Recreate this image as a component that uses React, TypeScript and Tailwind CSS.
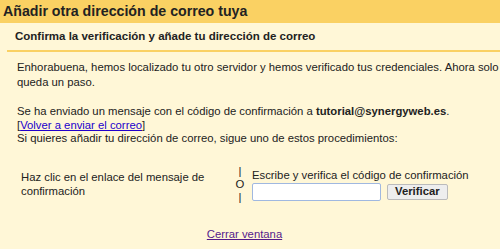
export default function App() {
  return (
    <div
      className="w-[500px] h-[249px] bg-[#fff7d7] text-[#222] overflow-hidden"
      style={{ fontFamily: '"Liberation Sans", Arial, sans-serif' }}
    >
      <div className="h-[23px] bg-[#fad163] pl-[3px] flex items-center">
        <h1 className="text-[14.2px] font-bold leading-none">Añadir otra dirección de correo tuya</h1>
      </div>

      <div className="ml-[7px] h-[29px] border-b-2 border-[#fad163] pl-[8px] flex items-center">
        <h2 className="text-[11.5px] font-bold">Confirma la verificación y añade tu dirección de correo</h2>
      </div>

      <div className="pl-[17px] pt-[8px] text-[11.3px]">
        <p className="leading-[15px] w-[482px]">
          Enhorabuena, hemos localizado tu otro servidor y hemos verificado tus credenciales. Ahora solo queda un paso.
        </p>

        <div className="mt-[15px] leading-[13.5px]">
          <div>
            Se ha enviado un mensaje con el código de confirmación a <b>tutorial@synergyweb.es</b>.
          </div>
          <div>
            [<a href="#" className="text-[#2200cc] underline">Volver a enviar el correo</a>]
          </div>
          <div>Si quieres añadir tu dirección de correo, sigue uno de estos procedimientos:</div>
        </div>

        <div className="mt-[19px] flex items-center">
          <div className="w-[212px] pl-[4px] leading-[14px]">
            Haz clic en el enlace del mensaje de confirmación
          </div>
          <div className="w-[22px] flex flex-col items-center leading-[13px]">
            <span>|</span>
            <span>O</span>
            <span>|</span>
          </div>
          <div className="pl-[1px]">
            <div className="leading-[14px]">Escribe y verifica el código de confirmación</div>
            <div className="mt-[1px] flex items-center gap-[6px]">
              <input
                type="text"
                className="w-[129px] h-[18px] bg-white border border-[#a0b8e0] rounded-[2px] outline-none"
              />
              <button className="h-[16px] px-[7px] bg-[#eeeeee] border border-[#bbbbbb] rounded-[2px] font-bold leading-none">
                Verificar
              </button>
            </div>
          </div>
        </div>

        <div className="mt-[22px] flex justify-center pr-[28px]">
          <a href="#" className="text-[#551a8b] underline">Cerrar ventana</a>
        </div>
      </div>
    </div>
  )
}
